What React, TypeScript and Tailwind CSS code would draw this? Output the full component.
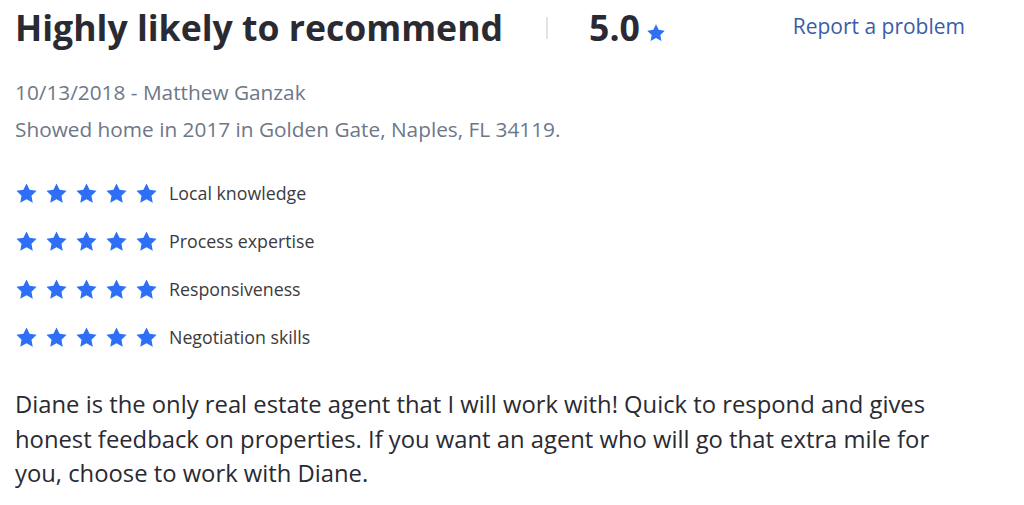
import React from "react";

const Star = ({ className }: { className?: string }) => (
  <svg viewBox="0 0 24 24" className={className} fill="currentColor">
    <path d="M12 1.5l3.2 6.7 7.3 1-5.3 5.1 1.3 7.3L12 18.1l-6.5 3.5 1.3-7.3-5.3-5.1 7.3-1z" />
  </svg>
);

const App = () => {
  const categories = [
    "Local knowledge",
    "Process expertise",
    "Responsiveness",
    "Negotiation skills",
  ];

  return (
    <div className="w-[1024px] h-[505px] bg-white font-['Open_Sans',sans-serif] overflow-hidden">
      <div className="pl-[15px] pr-[59px]">
        <div className="flex items-center h-[54px]">
          <h2 className="text-[35.6px] leading-[48px] font-bold text-[#2a2a33]">
            Highly likely to recommend
          </h2>
          <div className="ml-[43px] w-[2px] h-[22px] bg-[#e4e4e6] mt-[2px]" />
          <div className="ml-[41px] flex items-end">
            <span className="text-[35.6px] leading-[48px] font-bold text-[#2a2a33]">5.0</span>
            <Star className="ml-[6px] mb-[8px] w-[20px] h-[20px] text-[#2e6ff5]" />
          </div>
          <a className="ml-auto text-[21px] text-[#3b5ca8]">Report a problem</a>
        </div>

        <div className="mt-[20px] text-[20.8px] leading-[37px] text-[#6e7788]">
          <p>10/13/2018 - Matthew Ganzak</p>
          <p>Showed home in 2017 in Golden Gate, Naples, FL 34119.</p>
        </div>

        <ul className="mt-[33px] flex flex-col gap-[24px]">
          {categories.map((c) => (
            <li key={c} className="flex items-center h-[24px]">
              <div className="flex gap-[7px]">
                {[0, 1, 2, 3, 4].map((i) => (
                  <Star key={i} className="w-[23px] h-[23px] text-[#2e6ff5]" />
                ))}
              </div>
              <span className="ml-[11px] text-[17.8px] text-[#3b3b40]">{c}</span>
            </li>
          ))}
        </ul>

        <p className="mt-[38px] text-[23.8px] leading-[34.5px] text-[#2a2a33] max-w-[930px]">
          Diane is the only real estate agent that I will work with! Quick to respond and gives
          honest feedback on properties. If you want an agent who will go that extra mile for
          you, choose to work with Diane.
        </p>
      </div>
    </div>
  );
};

export default App;
